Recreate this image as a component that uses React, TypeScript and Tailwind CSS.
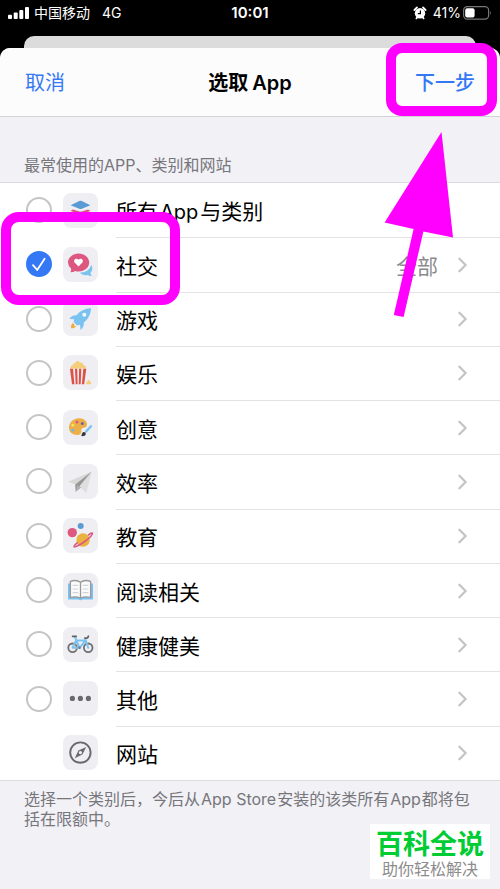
import React from 'react';

type Category = {
  id: string;
  label: React.ReactNode;
  icon: React.ReactNode;
  checked?: boolean;
  detail?: string;
  chevron?: boolean;
  selectable?: boolean;
};

const LayersIcon = () => (
  <>
    <path d="M7.5 22.5 L17.5 18.5 L27.5 22.5 L17.5 27.5 Z" fill="#7cc5ee" />
    <path d="M7.6 17.7 L10 16.4 L16.4 18.6 Q17.5 19 18.6 18.6 L25 16.4 L27.4 17.7 L18.8 22 Q17.5 22.5 16.2 22 Z" fill="#dc5880" />
    <path d="M7.6 12.2 L16.2 8 Q17.5 7.5 18.8 8 L27.4 12.2 L18.8 15.8 Q17.5 16.3 16.2 15.8 Z" fill="#5b9bd5" />
  </>
);

const SocialIcon = () => (
  <>
    <path d="M28.2 17.8 C30 20.5 29.6 24 27.5 26 Q27.8 28 28.8 29 Q26.5 29.4 24.6 28 C21.6 28.6 18.3 27.6 17 25.5 C22 26 27 23 28.2 17.8 Z" fill="#7ac3f0" />
    <path d="M15.6 6.6 C21.8 6.6 26.2 10.6 26.2 15.6 C26.2 20.6 21.8 24.4 15.6 24.4 Q13.8 24.4 12.2 23.9 Q10 25.3 7.4 25.2 Q8.4 23.6 8 21.5 Q5 19 5 15.6 C5 10.6 9.4 6.6 15.6 6.6 Z" fill="#dc5880" />
    <path d="M15.5 19.4 L11.6 15.6 C9.8 13.2 13.2 10 15.5 12.8 C17.8 10 21.2 13.2 19.4 15.6 Z" fill="#fff" />
  </>
);

const RocketIcon = () => (
  <>
    <path d="M28 7.3 C22 7.5 17 10 13.6 14.3 C10.6 14 8.2 15.2 6.3 18 L11.2 18.2 L10.6 21 L14 24.4 L17 23.8 L17.6 29 C20.2 27 21.2 24.4 20.8 21.6 C25.2 18 27.8 13.2 28 7.3 Z" fill="#7ac3f0" />
    <circle cx="21.3" cy="13.7" r="2" fill="#f4f8fc" />
    <path d="M9.9 22 C8.4 23 7.8 25 8.1 27.3 C10.4 27.4 12.2 26.6 13 25 L11.2 25 L11.4 23.4 Z" fill="#f0a93c" />
  </>
);

const PopcornIcon = () => (
  <>
    <path d="M7.4 13.8 C6.9 11.4 8.4 10.2 9.9 10.3 C9.7 8.4 11.3 7.6 12.4 8 C13.4 5.4 16 5.6 16.7 7.6 C18.8 7 20.4 8.4 20.2 10 C22.2 10 23.4 11.8 22.8 13.8 Z" fill="#f4ce78" />
    <path d="M7 13.7 L23.3 13.7 L21.2 29.2 L9 29.2 Z" fill="#f5e9ea" />
    <path d="M7 13.7 L10 13.7 L11.4 29.2 L9 29.2 Z M12 13.7 L14.2 13.7 L14.6 29.2 L12.7 29.2 Z M16.1 13.7 L18.3 13.7 L17.7 29.2 L15.8 29.2 Z M20.3 13.7 L23.3 13.7 L21.2 29.2 L18.9 29.2 Z" fill="#d9534a" />
    <path d="M23.2 29.2 C22.7 27.6 23.6 26.8 24.3 26.9 C24.4 24.4 26.9 24.4 27 26.7 C28.3 26.8 28.6 28 28 29.2 Z" fill="#f4ce78" />
  </>
);

const PaletteIcon = () => (
  <>
    <path d="M16 8.3 C20.8 8.3 24 11 24 14.4 C24 16.8 22.6 17.5 20.7 17.7 C18.6 18 18 19.2 18.4 21 C18.7 23 17.4 25 14.2 25 C9.4 25 6 22.2 6 17.8 C6 12.4 10.4 8.3 16 8.3 Z" fill="#ebb04a" />
    <circle cx="14" cy="12" r="1.5" fill="#dc5880" />
    <circle cx="19.3" cy="13.4" r="1.5" fill="#6d62a8" />
    <circle cx="9.8" cy="15.2" r="1.4" fill="#fae45a" />
    <circle cx="9.8" cy="20.2" r="1.4" fill="#6cb9e8" />
    <path d="M23.2 21.4 L28 16.2" stroke="#7ac3f0" strokeWidth="2.4" strokeLinecap="round" />
    <path d="M18 25.8 C19 25 18.6 23.4 19.8 22.4 C21.4 21.2 23.6 23 22.6 24.8 C21.6 26.4 19.4 26.4 18 25.8 Z" fill="#3a3a3d" />
  </>
);

const PlaneIcon = () => (
  <>
    <path d="M28.7 7.6 L5.3 17.8 L12.4 20.6 Z" fill="#d8d8d6" />
    <path d="M28.7 7.6 L17 22.8 L23.3 29.3 Z" fill="#dededc" />
    <path d="M28.7 7.6 L12.2 20.4 L12.6 27.8 L18 23.4 L16.4 22.6 Z" fill="#98989a" />
    <path d="M12.6 27.8 L14.5 21.4 L18 23.4 Z" fill="#b2b2b3" />
  </>
);

const PlanetIcon = () => (
  <>
    <circle cx="17.7" cy="8" r="3" fill="#5b9bd5" />
    <circle cx="9.3" cy="14.6" r="4.7" fill="#dc5880" />
    <circle cx="20" cy="22" r="6.7" fill="#ebb23f" />
    <path d="M25.4 17 C27.4 15.2 29.2 14.6 29.4 15.2 C29.8 16.4 26.2 20.2 21 24 C15.8 27.8 11.6 29.6 11 28.6 C10.7 28 12 26.6 14.2 24.8" fill="none" stroke="#dc5880" strokeWidth="1.6" strokeLinecap="round" />
  </>
);

const BookIcon = () => (
  <>
    <path d="M5 10.6 H30 V26.4 H19.6 Q17.5 28 15.4 26.4 H5 Z" fill="#7ac3f0" />
    <path d="M17.5 9.2 C14.8 7.4 10.4 7.3 7.4 8.4 V24.4 C10.6 23.6 14.8 23.7 17.5 25 C20.2 23.7 24.4 23.6 27.6 24.4 V8.4 C24.6 7.3 20.2 7.4 17.5 9.2 Z" fill="#fbfbfb" stroke="#98989a" strokeWidth="1.3" strokeLinejoin="round" />
    <path d="M17.5 9.2 V25" stroke="#98989a" strokeWidth="1.3" />
    <path d="M9.6 12.3 H15.2 M9.6 16 H15.2 M9.6 19.7 H15.2 M19.8 12.3 H25.4 M19.8 16 H25.4 M19.8 19.7 H25.4" stroke="#d4d4d6" strokeWidth="1.2" />
  </>
);

const BikeIcon = () => (
  <g fill="none" strokeLinecap="round" strokeLinejoin="round">
    <circle cx="9.6" cy="20.8" r="4.3" stroke="#707074" strokeWidth="1.8" />
    <circle cx="25.2" cy="20.8" r="4.3" stroke="#707074" strokeWidth="1.8" />
    <path d="M9.6 20.8 L13 13.6 H22.4 L16.6 20.8 Z M16.6 20.8 L12 10.2 M25.2 20.8 L22 11.4" stroke="#7ac3f0" strokeWidth="2" />
    <path d="M9.6 9.4 H13.2 M22 11.2 L24.6 10.8 L25.4 9.2" stroke="#606064" strokeWidth="1.7" />
    <circle cx="16.6" cy="20.8" r="1.2" fill="#77777b" />
  </g>
);

const DotsIcon = () => (
  <g fill="#6a6a6d">
    <circle cx="9.4" cy="17.4" r="2.6" />
    <circle cx="17.4" cy="17.4" r="2.6" />
    <circle cx="25.4" cy="17.4" r="2.6" />
  </g>
);

const CompassIcon = () => (
  <>
    <circle cx="17.4" cy="17.6" r="10.2" fill="none" stroke="#6a6a6d" strokeWidth="1.9" />
    <path fillRule="evenodd" d="M23.2 12 L19.4 19.6 L11.8 23.2 L15.4 15.6 Z M17.4 16 a1.6 1.6 0 1 0 0.01 0 Z" fill="#6a6a6d" />
  </>
);

const categories: Category[] = [
  {
    id: 'all',
    label: (
      <>
        所有<span className="mx-0.5 text-xl">App</span>与类别
      </>
    ),
    icon: <LayersIcon />,
    chevron: false,
  },
  { id: 'social', label: '社交', icon: <SocialIcon />, checked: true, detail: '全部' },
  { id: 'games', label: '游戏', icon: <RocketIcon /> },
  { id: 'entertainment', label: '娱乐', icon: <PopcornIcon /> },
  { id: 'creativity', label: '创意', icon: <PaletteIcon /> },
  { id: 'productivity', label: '效率', icon: <PlaneIcon /> },
  { id: 'education', label: '教育', icon: <PlanetIcon /> },
  { id: 'reading', label: '阅读相关', icon: <BookIcon /> },
  { id: 'health', label: '健康健美', icon: <BikeIcon /> },
  { id: 'other', label: '其他', icon: <DotsIcon /> },
  { id: 'websites', label: '网站', icon: <CompassIcon />, selectable: false },
];

const StatusBar = () => (
  <div className="grid h-6 grid-cols-3 items-center text-sm text-white">
    <div className="flex items-center pl-2">
      <svg width="22" height="12" viewBox="0 0 22 12" fill="#fff" aria-hidden="true">
        <rect x="0" y="7.8" width="4" height="4.2" rx="1" />
        <rect x="5.7" y="5.6" width="4" height="6.4" rx="1" />
        <rect x="11.3" y="3" width="4" height="9" rx="1" />
        <rect x="17" y="0" width="4" height="12" rx="1" />
      </svg>
      <span className="ml-1">中国移动</span>
      <span className="ml-3">4G</span>
    </div>
    <time className="text-center text-[15px] font-semibold">10:01</time>
    <div className="flex items-center justify-end pr-2">
      <svg width="14" height="14" viewBox="0 0 14 14" aria-hidden="true">
        <path d="M1.4 4 L4 1.4 M12.6 4 L10 1.4 M3.4 12.4 L4.4 11 M10.6 12.4 L9.6 11" stroke="#fff" strokeWidth="1.8" strokeLinecap="round" />
        <circle cx="7" cy="7.2" r="5.2" fill="#fff" />
        <path d="M7.4 4.4 V7.6 H4.8" fill="none" stroke="#000" strokeWidth="1.2" />
      </svg>
      <span className="ml-1.5">41%</span>
      <svg className="ml-0.5" width="29" height="14" viewBox="0 0 29 14" aria-hidden="true">
        <rect x="0.6" y="0.6" width="25" height="12.6" rx="3.6" fill="none" stroke="#77777a" strokeWidth="1.2" />
        <rect x="2.2" y="2.2" width="9.4" height="9.4" rx="2" fill="#fff" />
        <path d="M27.2 4.8 Q28.8 6.9 27.2 9 Z" fill="#77777a" />
      </svg>
    </div>
  </div>
);

const Chevron = () => (
  <svg width="10" height="16" viewBox="0 0 10 16" fill="none" aria-hidden="true">
    <path d="M1.4 1.8 L7.6 8 L1.4 14.2" stroke="#c4c4c7" strokeWidth="2.3" strokeLinecap="round" strokeLinejoin="round" />
  </svg>
);

const CategoryRow = ({ item, first }: { item: Category; first: boolean }) => {
  const { id, label, icon, checked, detail, chevron = true, selectable = true } = item;
  return (
    <li className="flex items-center pl-[26px]">
      <span className="relative flex size-[26px] shrink-0">
        {selectable && (
          <>
            <input
              id={id}
              type="checkbox"
              defaultChecked={checked}
              className="peer size-[26px] appearance-none rounded-full border-2 border-[#c5c5c7] checked:border-[#3478f6] checked:bg-[#3478f6]"
            />
            <svg className="pointer-events-none absolute inset-0 hidden peer-checked:block" width="26" height="26" viewBox="0 0 26 26" fill="none" aria-hidden="true">
              <path d="M7 14.2 L11.2 19 L18.6 7.8" stroke="#fff" strokeWidth="1.8" strokeLinecap="round" strokeLinejoin="round" />
            </svg>
          </>
        )}
      </span>
      <span className="ml-[11px] size-[35px] shrink-0 rounded-lg bg-[#efeef3]">
        <svg width="35" height="35" viewBox="0 0 35 35" fill="none" aria-hidden="true">
          {icon}
        </svg>
      </span>
      <div className={`ml-[18px] flex flex-1 items-center self-stretch pr-8 ${first ? '' : 'border-t border-[#e3e3e5]'}`}>
        {selectable ? (
          <label htmlFor={id} className="flex-1 pt-1 text-[21px] leading-7">{label}</label>
        ) : (
          <span className="flex-1 pt-1 text-[21px] leading-7">{label}</span>
        )}
        {detail && <span className="mr-5 pt-1 text-[21px] leading-7 text-[#8a8a8e]">{detail}</span>}
        {chevron && (
          <button type="button" aria-label="展开">
            <Chevron />
          </button>
        )}
      </div>
    </li>
  );
};

const App: React.FC = () => {
  return (
    <div className="relative flex min-h-screen flex-col overflow-hidden bg-black pt-px font-['Inter','Noto_Sans_CJK_SC',sans-serif] text-black">
      <StatusBar />
      {/* Sheet behind */}
      <div className="mx-6 mt-[11px] h-3 rounded-t-[10px] bg-[#dcdcdd]"></div>

      <main className="flex flex-1 flex-col overflow-hidden rounded-t-[10px] bg-[#f2f1f6]">
        <header className="grid h-[69px] grid-cols-3 items-center border-b border-[#d3d3d6] bg-[#fcfcfd] px-[25px] pt-0.5 text-xl">
          <button type="button" className="justify-self-start text-[#3478f6]">取消</button>
          <h1 className="text-center font-semibold">
            选取<span className="ml-1">App</span>
          </h1>
          <button type="button" className="justify-self-end font-medium text-[#3478f6]">下一步</button>
        </header>

        <h2 className="flex h-[65px] items-end px-6 pb-[5px] text-base text-[#76767b]">
          最常使用的APP、类别和网站
        </h2>

        <ul className="grid min-h-[599px] auto-rows-fr border-y border-[#dcdce0] bg-white">
          {categories.map((item, index) => (
            <CategoryRow key={item.id} item={item} first={index === 0} />
          ))}
        </ul>

        <p className="px-6 pt-2 text-base leading-5 text-[#76767b]">
          选择一个类别后，今后从<span className="mx-px">App Store</span>安装的该类所有<span className="mx-px">App</span>都将包括在限额中。
        </p>
      </main>

      {/* Highlights */}
      <div className="pointer-events-none absolute top-[43px] right-[3px] h-[73px] w-[111px] rounded-2xl border-[10px] border-[#ff00ff]"></div>
      <div className="pointer-events-none absolute top-[212px] left-px h-[93px] w-[179px] rounded-[18px] border-[10px] border-[#ff00ff]"></div>
      <svg className="pointer-events-none absolute top-[132px] right-[46px]" width="70" height="186" viewBox="0 0 70 186" fill="#ff00ff" aria-hidden="true">
        <path d="M57.5 0 L69 105.5 L39.4 99.5 L19.6 185 L9.8 183 L29.6 97 L0.6 90.5 Z" />
      </svg>

      {/* Watermark */}
      <div className="absolute right-[10px] bottom-[10px] flex h-[55px] w-[120px] flex-col items-center justify-center bg-white pt-0.5">
        <strong className="text-[27px] leading-8 font-bold text-[#00cc33]">百科全说</strong>
        <span className="text-base leading-4 text-[#8c8c8c]">助你轻松解决</span>
      </div>
    </div>
  );
};

export default App;
